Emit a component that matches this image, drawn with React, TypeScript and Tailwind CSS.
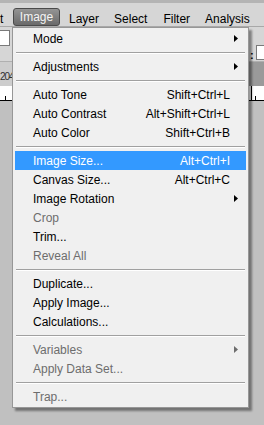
import React from 'react';

type Item =
  | { kind: 'sep' }
  | { kind: 'item'; label: string; shortcut?: string; submenu?: boolean; disabled?: boolean; active?: boolean };

const items: Item[] = [
  { kind: 'item', label: 'Mode', submenu: true },
  { kind: 'sep' },
  { kind: 'item', label: 'Adjustments', submenu: true },
  { kind: 'sep' },
  { kind: 'item', label: 'Auto Tone', shortcut: 'Shift+Ctrl+L' },
  { kind: 'item', label: 'Auto Contrast', shortcut: 'Alt+Shift+Ctrl+L' },
  { kind: 'item', label: 'Auto Color', shortcut: 'Shift+Ctrl+B' },
  { kind: 'sep' },
  { kind: 'item', label: 'Image Size...', shortcut: 'Alt+Ctrl+I', active: true },
  { kind: 'item', label: 'Canvas Size...', shortcut: 'Alt+Ctrl+C' },
  { kind: 'item', label: 'Image Rotation', submenu: true },
  { kind: 'item', label: 'Crop', disabled: true },
  { kind: 'item', label: 'Trim...' },
  { kind: 'item', label: 'Reveal All', disabled: true },
  { kind: 'sep' },
  { kind: 'item', label: 'Duplicate...' },
  { kind: 'item', label: 'Apply Image...' },
  { kind: 'item', label: 'Calculations...' },
  { kind: 'sep' },
  { kind: 'item', label: 'Variables', submenu: true, disabled: true },
  { kind: 'item', label: 'Apply Data Set...', disabled: true },
  { kind: 'sep' },
  { kind: 'item', label: 'Trap...', disabled: true },
];

const Arrow = ({ color }: { color: string }) => (
  <svg width="4" height="7" viewBox="0 0 4 7" className="absolute right-[8px] top-[6px]">
    <path d="M0 0 L4 3.5 L0 7 Z" fill={color} />
  </svg>
);

const MenuRow = ({ item }: { item: Extract<Item, { kind: 'item' }> }) => {
  const text = item.active ? 'text-white' : item.disabled ? 'text-[#6d6d6d]' : 'text-black';
  return (
    <div
      className={`relative mx-[2px] h-[19px] flex items-center pt-[1px] pl-[18px] pr-[16px] ${
        item.active ? 'bg-[#3399ff]' : ''
      } ${text}`}
    >
      <span className="flex-1 whitespace-nowrap">{item.label}</span>
      {item.shortcut && <span className="whitespace-nowrap">{item.shortcut}</span>}
      {item.submenu && <Arrow color={item.disabled ? '#6d6d6d' : '#000'} />}
    </div>
  );
};

const Ruler = () => (
  <div className="relative h-[15px] bg-white border-b border-black">
    {[5, 30, 55, 80, 105, 130, 155, 180, 205, 230, 255].map((x) => (
      <div key={x} className="absolute bottom-0 w-px h-[4px] bg-black" style={{ left: x }} />
    ))}
    <div className="absolute bottom-0 left-[251px] w-px h-[14px] bg-black" />
  </div>
);

export default function App() {
  return (
    <div className="relative w-[264px] h-[425px] overflow-hidden bg-[#c0c0c0] text-[12px] font-['Liberation_Sans',Arial,sans-serif]">
      {/* window frame strip */}
      <div className="h-[3px] bg-[#b4b4b4]" />
      {/* menu bar */}
      <div className="h-[24px] bg-[#d6d6d6] flex items-start pt-[5px] text-black border-b border-[#a8a8a8]">
        <span className="w-[13px] pt-[2px] overflow-hidden">t</span>
        <span className="h-[18px] w-[47px] flex items-center justify-center rounded-[3px] border border-[#4a4a4a] bg-gradient-to-b from-[#959595] to-[#6a6a6a] text-[#f4f4f4]">
          Image
        </span>
        <span className="ml-[9px] pt-[2px]">Layer</span>
        <span className="ml-[15px] pt-[2px]">Select</span>
        <span className="ml-[16px] pt-[2px]">Filter</span>
        <span className="ml-[15px] pt-[2px]">Analysis</span>
      </div>
      {/* options bar */}
      <div className="relative h-[34px] bg-[#d6d6d6]">
        <div className="absolute left-0 top-[3px] w-[10px] h-[16px] bg-white border border-[#7a7a7a] border-l-0" />
        <span className="absolute left-[250px] top-[20px] font-bold text-[11px]">:</span>
        <div className="absolute left-[256px] top-[18px] w-[10px] h-[15px] bg-white border border-[#7a7a7a]" />
      </div>
      {/* document tabs */}
      <div className="flex h-[25px] border-t border-[#b0b0b0] overflow-hidden">
        <div className="w-[150px] bg-[#cdcdcd] flex items-center pt-[5px] text-[10px] tracking-[-1px] text-[#303030]">
          <span>204</span>
        </div>
        <div className="flex-1 bg-[#9a9a9a]" />
      </div>
      <Ruler />

      {/* dropdown menu */}
      <div className="absolute left-[12px] top-[27px] w-[237px] bg-[#f0f0f0] border border-[#979797] py-[1px] shadow-[3px_3px_2px_rgba(0,0,0,0.4)]">
        {items.map((item, i) =>
          item.kind === 'sep' ? (
            <div key={i} className="h-[9px] flex flex-col justify-center px-[3px]">
              <div className="h-px bg-[#a0a0a0]" />
              <div className="h-px bg-white" />
            </div>
          ) : (
            <MenuRow key={i} item={item} />
          )
        )}
      </div>
    </div>
  );
}
